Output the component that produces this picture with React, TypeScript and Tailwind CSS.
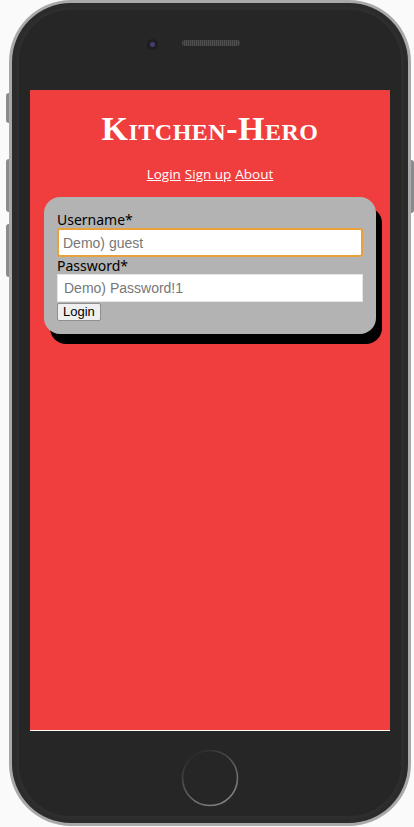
import React from "react";

function SideButtons() {
  return (
    <>
      <div className="absolute left-[-3px] top-[93px] w-[3px] h-[30px] rounded-l-sm bg-[#8a8a8f]" />
      <div className="absolute left-[-3px] top-[159px] w-[3px] h-[53px] rounded-l-sm bg-[#8a8a8f]" />
      <div className="absolute left-[-3px] top-[224px] w-[3px] h-[53px] rounded-l-sm bg-[#8a8a8f]" />
      <div className="absolute right-[-3px] top-[160px] w-[3px] h-[53px] rounded-r-sm bg-[#8a8a8f]" />
    </>
  );
}

function HomeButton() {
  return (
    <svg width="60" height="60" viewBox="0 0 60 60">
      <defs>
        <linearGradient id="hb" x1="0.2" y1="0" x2="0.8" y2="1">
          <stop offset="0" stopColor="#262626" />
          <stop offset="0.45" stopColor="#555" />
          <stop offset="1" stopColor="#8a8a8a" />
        </linearGradient>
      </defs>
      <circle cx="30" cy="30" r="27.5" fill="#262626" stroke="url(#hb)" strokeWidth="1.6" />
    </svg>
  );
}

export default function App() {
  return (
    <div className="w-[414px] h-[827px] bg-[#fafafa] flex justify-start">
      <div className="relative ml-[9px] w-[402px] h-[826px] rounded-[62px] bg-[#a9a9a9] p-[3px]">
        <SideButtons />
        <div className="w-full h-full rounded-[59px] bg-[#2b2b2b] p-[4px]">
          <div className="w-full h-full rounded-[55px] bg-[#262626] border-[3px] border-[#2e2e2e] flex flex-col items-center">
            <div className="h-[80px] w-full flex justify-center items-start pt-[30px] gap-[24px]">
              <div className="w-[11px] h-[11px] rounded-full bg-[#1d1d22] flex items-center justify-center mt-[-1px]">
                <div className="w-[5px] h-[5px] rounded-full bg-[#4a3c6a]" />
              </div>
              <div className="w-[58px] h-[6px] rounded-full bg-[repeating-linear-gradient(90deg,#4d4d4d_0px,#4d4d4d_1px,#3a3a3a_1px,#3a3a3a_2px)] mr-[34px]" />
            </div>
            <div className="w-[360px] h-[641px] bg-[#f03d3d] border-b border-white flex flex-col items-center font-['Open_Sans',sans-serif]">
              <h1 className="mt-[20px] text-[34px] leading-[38px] font-bold text-white [font-variant:small-caps] font-['Liberation_Serif',serif] tracking-[0.5px]">
                Kitchen-Hero
              </h1>
              <nav className="mt-[16px] flex gap-[4px] text-[13.5px] leading-[20px] text-white">
                <a className="underline" href="#">Login</a>
                <a className="underline" href="#">Sign up</a>
                <a className="underline" href="#">About</a>
              </nav>
              <form className="mt-[13px] w-[332px] rounded-[16px] bg-[#b3b3b3] shadow-[6px_10px_0_0_#000] px-[13px] pt-[15px] pb-[13px] flex flex-col">
                <label className="text-[14px] leading-[16px] text-black font-['Noto_Sans',sans-serif]">Username*</label>
                <input
                  className="h-[29px] w-full rounded-[3px] bg-white border-2 border-[#e9a23b] px-[4px] text-[14px] font-['Liberation_Sans',sans-serif] placeholder:text-[#777] outline-none"
                  placeholder="Demo) guest"
                />
                <label className="mt-[1px] text-[14px] leading-[16px] text-black font-['Noto_Sans',sans-serif]">Password*</label>
                <input
                  type="password"
                  className="h-[28px] w-full bg-white border border-[#e6e6e6] px-[6px] text-[14px] font-['Liberation_Sans',sans-serif] placeholder:text-[#777] outline-none"
                  placeholder="Demo) Password!1"
                />
                <div className="mt-[1px] flex">
                  <button
                    type="button"
                    className="h-[18px] px-[5px] text-[13px] leading-[14px] text-black bg-[#efefef] border border-[#8f8f8f] rounded-[2px] font-['Liberation_Sans',sans-serif]"
                  >
                    Login
                  </button>
                </div>
              </form>
            </div>
            <div className="flex-1 w-full flex items-start justify-center pt-[17px]">
              <HomeButton />
            </div>
          </div>
        </div>
      </div>
    </div>
  );
}
